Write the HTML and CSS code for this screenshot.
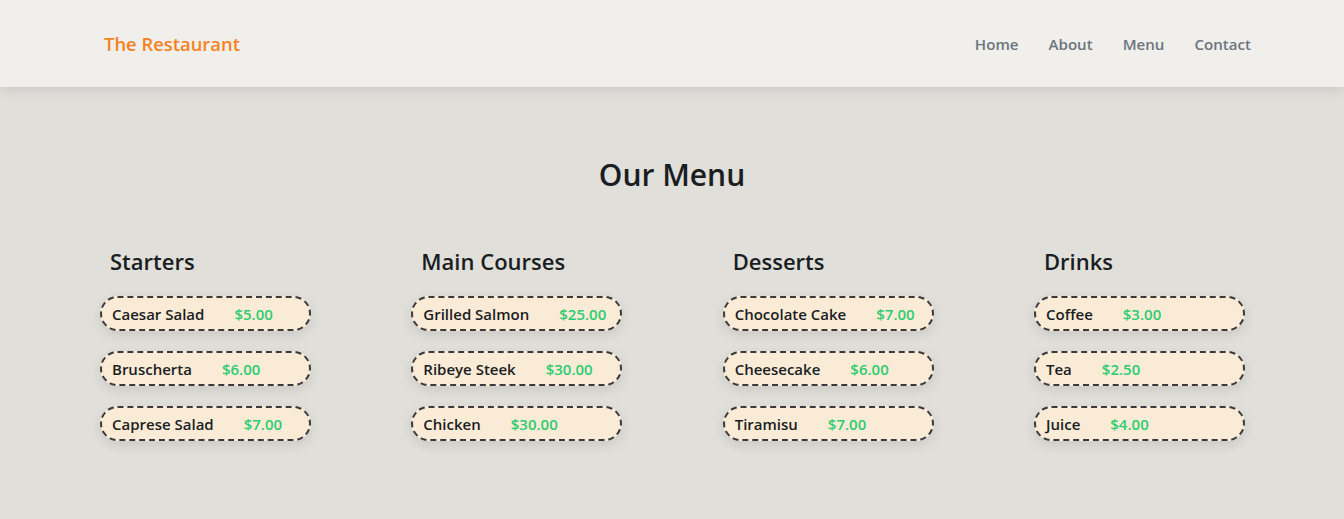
FILE: index.html
```html
<!DOCTYPE html>
<html lang="en">
<head>
<meta charset="utf-8">
<title>The Restaurant</title>
<link rel="stylesheet" href="styles.css">
</head>
<body>
<header class="site-header">
  <a class="logo" href="#">The Restaurant</a>
  <nav class="nav">
    <a href="#">Home</a>
    <a href="#">About</a>
    <a href="#">Menu</a>
    <a href="#">Contact</a>
  </nav>
</header>
<main class="menu">
  <h1 class="menu-title">Our Menu</h1>
  <div class="columns">
    <section class="column">
      <h2>Starters</h2>
      <ul class="items">
        <li class="item"><span class="name">Caesar Salad</span><span class="price">$5.00</span></li>
        <li class="item"><span class="name">Bruscherta</span><span class="price">$6.00</span></li>
        <li class="item"><span class="name">Caprese Salad</span><span class="price">$7.00</span></li>
      </ul>
    </section>
    <section class="column">
      <h2>Main Courses</h2>
      <ul class="items">
        <li class="item"><span class="name">Grilled Salmon</span><span class="price">$25.00</span></li>
        <li class="item"><span class="name">Ribeye Steek</span><span class="price">$30.00</span></li>
        <li class="item"><span class="name">Chicken</span><span class="price">$30.00</span></li>
      </ul>
    </section>
    <section class="column">
      <h2>Desserts</h2>
      <ul class="items">
        <li class="item"><span class="name">Chocolate Cake</span><span class="price">$7.00</span></li>
        <li class="item"><span class="name">Cheesecake</span><span class="price">$6.00</span></li>
        <li class="item"><span class="name">Tiramisu</span><span class="price">$7.00</span></li>
      </ul>
    </section>
    <section class="column">
      <h2>Drinks</h2>
      <ul class="items">
        <li class="item"><span class="name">Coffee</span><span class="price">$3.00</span></li>
        <li class="item"><span class="name">Tea</span><span class="price">$2.50</span></li>
        <li class="item"><span class="name">Juice</span><span class="price">$4.00</span></li>
      </ul>
    </section>
  </div>
</main>
</body>
</html>
```
FILE: styles.css
```css
* { box-sizing: border-box; }
html, body { margin: 0; padding: 0; }
body {
  font-family: "Open Sans", "Noto Sans", sans-serif;
  background: #e0dfda;
  color: #1a1d21;
  height: 519px;
  overflow: hidden;
}
.site-header {
  height: 87px;
  background: #f0efeb;
  display: flex;
  align-items: center;
  justify-content: space-between;
  padding: 0 93px 0 104px;
  box-shadow: 0 2px 12px rgba(0,0,0,0.12);
  position: relative;
}
.logo {
  color: #f5821f;
  font-size: 18.4px;
  font-weight: 600;
  text-decoration: none;
}
.nav {
  display: flex;
  gap: 30px;
  padding-top: 1px;
}
.nav a {
  color: #6c757d;
  font-size: 15.1px;
  font-weight: 600;
  text-decoration: none;
}
.menu {
  padding-top: 68px;
}
.menu-title {
  margin: 0;
  text-align: center;
  font-size: 30px;
  font-weight: 600;
  line-height: 40px;
}
.columns {
  width: 1145px;
  margin: 50px 0 0 calc(50% - 572px);
  display: flex;
  justify-content: space-between;
}
.column {
  width: 211px;
}
.column h2 {
  margin: 0 0 19px 10px;
  font-size: 22px;
  font-weight: 600;
  line-height: 32px;
}
.items {
  list-style: none;
  margin: 0;
  padding: 0;
  display: flex;
  flex-direction: column;
  gap: 20px;
}
.item {
  height: 35px;
  display: flex;
  align-items: center;
  gap: 30px;
  padding: 0 10px;
  background: #faebd7;
  border: 2px dashed #3a3a3a;
  border-radius: 18px;
  box-shadow: 0 4px 12px rgba(0,0,0,0.1);
  font-size: 15px;
  font-weight: 600;
}
.name { color: #1a1d21; }
.price { color: #2ecc71; }
```
